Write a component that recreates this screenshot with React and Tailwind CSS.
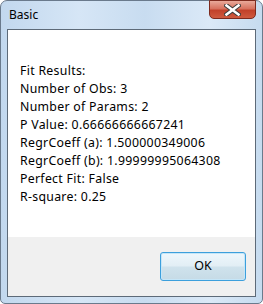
import React from "react";

const lines = [
  "Fit Results:",
  "Number of Obs: 3",
  "Number of Params: 2",
  "P Value: 0.66666666667241",
  "RegrCoeff (a): 1.500000349006",
  "RegrCoeff (b): 1.99999995064308",
  "Perfect Fit: False",
  "R-square: 0.25",
];

export default function App() {
  return (
    <div className="w-[263px] h-[304px] bg-white">
      {/* window frame */}
      <div className="relative w-[263px] h-[304px] rounded-t-[7px] rounded-b-[5px] border border-[#6a7a8c] bg-[linear-gradient(90deg,#c2d8ee_0%,#d6e6f6_30%,#c8dcf0_55%,#dbe9f7_80%,#c6dbef_100%)] flex flex-col">
        {/* title bar */}
        <div className="h-[28px] flex items-start">
          <span className="pl-[8px] pt-[6px] text-[12px] leading-[16px] text-black font-['Segoe_UI','Noto_Sans',sans-serif]">
            Basic
          </span>
        </div>
        {/* close button */}
        <div className="absolute top-[-1px] right-[6px] w-[47px] h-[19px] rounded-b-[5px] border border-[#7d2a1e] bg-[linear-gradient(180deg,#e9a99a_0%,#d7725f_45%,#c2412a_55%,#cf5a3f_100%)] flex items-center justify-center">
          <svg width="17" height="12" viewBox="0 0 17 12">
            <path d="M2.5 1.5 L14.5 10.5 M14.5 1.5 L2.5 10.5" stroke="#3a3a3a" strokeWidth="4.5" strokeLinecap="square" />
            <path d="M2.5 1.5 L14.5 10.5 M14.5 1.5 L2.5 10.5" stroke="#ffffff" strokeWidth="2.6" strokeLinecap="square" />
          </svg>
        </div>
        {/* client area */}
        <div className="mx-[6px] h-[268px] border border-[#5d6a78] flex flex-col">
          <div className="h-[207px] bg-white pl-[12px] pt-[32px] font-['Segoe_UI','Noto_Sans',sans-serif] text-[12.3px] tracking-[0.3px] leading-[18px] text-black">
            {lines.map((l) => (
              <div key={l}>{l}</div>
            ))}
          </div>
          <div className="flex-1 bg-[#f0f0f0] flex justify-end items-start pt-[15px] pr-[9px]">
            <button className="w-[86px] h-[29px] rounded-[3px] border border-[#3c9fdc] shadow-[inset_0_0_0_1px_#c5e6f8] bg-[linear-gradient(180deg,#eef7fc_0%,#e2eef5_48%,#cfe2ec_52%,#c6dbe6_100%)] text-[12.5px] text-black font-['Segoe_UI','Noto_Sans',sans-serif]">
              OK
            </button>
          </div>
        </div>
      </div>
    </div>
  );
}
